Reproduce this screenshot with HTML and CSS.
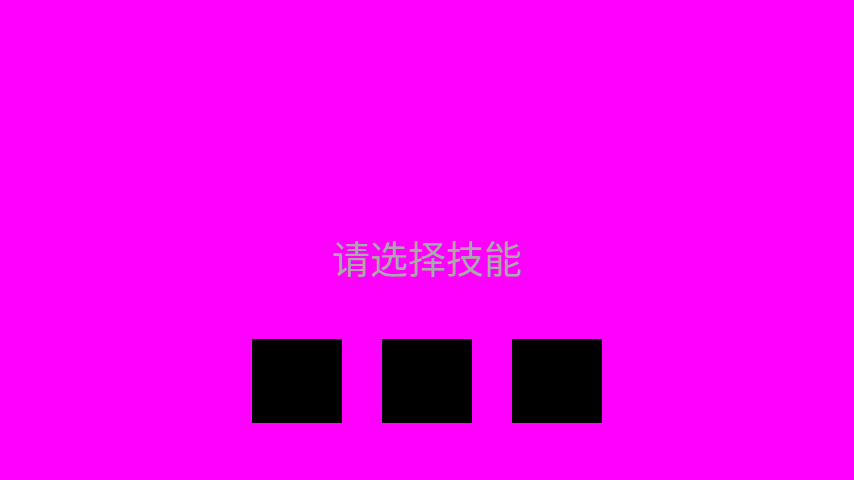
FILE: index.html
```html
<!DOCTYPE html>
<html lang="zh">
<head>
<meta charset="utf-8">
<link rel="stylesheet" href="styles.css">
</head>
<body>
<main class="screen">
  <h1 class="title">请选择技能</h1>
  <div class="skills">
    <div class="skill"></div>
    <div class="skill"></div>
    <div class="skill"></div>
  </div>
</main>
</body>
</html>
```
FILE: styles.css
```css
html, body {
  margin: 0;
  padding: 0;
  background: #ff00ff;
}
.screen {
  width: 854px;
  height: 480px;
  display: flex;
  flex-direction: column;
  align-items: center;
  padding-top: 238px;
  box-sizing: border-box;
}
.title {
  margin: 0;
  font-family: "Noto Sans CJK SC", "Noto Sans", sans-serif;
  font-weight: 400;
  font-size: 38px;
  line-height: 38px;
  color: #a9a9a9;
}
.skills {
  display: flex;
  gap: 40px;
  margin-top: 63px;
}
.skill {
  width: 90px;
  height: 84px;
  background: #000;
}
```
